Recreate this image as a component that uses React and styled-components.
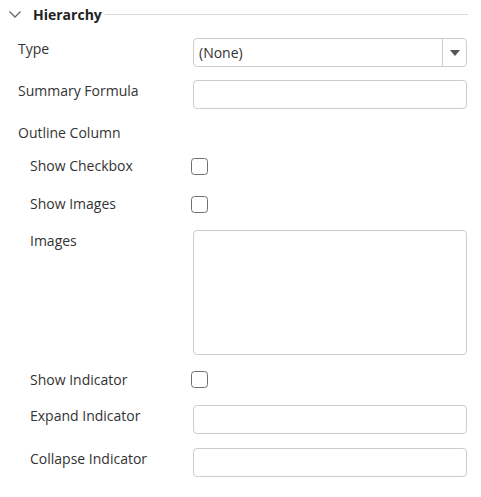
import React from "react";
import styled, { createGlobalStyle } from "styled-components";

const Global = createGlobalStyle`
  html, body { margin: 0; padding: 0; background: #fff; }
  body { font-family: "Open Sans", "Noto Sans", sans-serif; color: #333; }
`;

const Panel = styled.div`
  width: 481px;
  padding: 0 13px 0 0;
  box-sizing: border-box;
`;

const Header = styled.div`
  display: flex;
  align-items: center;
  height: 28px;
  padding-left: 8px;
`;

const Chevron = styled.svg`
  width: 14px;
  height: 14px;
  flex: none;
`;

const Title = styled.span`
  font-weight: 700;
  font-size: 14px;
  color: #222;
  margin-left: 11px;
  white-space: nowrap;
`;

const Rule = styled.div`
  flex: 1;
  height: 1px;
  background: #d9d9d9;
  margin-left: 3px;
`;

const Row = styled.div`
  display: flex;
  align-items: ${(p) => (p.$center ? "center" : "flex-start")};
  margin-top: ${(p) => p.$mt}px;
`;

const Label = styled.div`
  width: ${(p) => (p.$nested ? 163 : 175)}px;
  padding-left: ${(p) => (p.$nested ? 30 : 18)}px;
  padding-top: ${(p) => (p.$inset ? 1 : 0)}px;
  font-size: 14px;
  line-height: 20px;
  color: #333;
  white-space: nowrap;
  flex: none;
`;

const TextBox = styled.div`
  width: 274px;
  height: ${(p) => p.$h || 29}px;
  box-sizing: border-box;
  border: 1px solid #cdcdcd;
  border-radius: 4px;
  background: #fff;
`;

const Select = styled.div`
  width: 274px;
  height: 29px;
  box-sizing: border-box;
  border: 1px solid #cdcdcd;
  border-radius: 4px;
  display: flex;
  align-items: center;
`;

const SelectValue = styled.span`
  flex: 1;
  padding-left: 5px;
  font-size: 14px;
  color: #333;
`;

const SelectButton = styled.div`
  width: 23px;
  height: 100%;
  border-left: 1px solid #cdcdcd;
  display: flex;
  align-items: center;
  justify-content: center;
`;

const Arrow = styled.div`
  width: 0;
  height: 0;
  border-left: 5.5px solid transparent;
  border-right: 5.5px solid transparent;
  border-top: 6px solid #555;
  margin-top: 1px;
`;

const Check = styled.div`
  width: 17px;
  height: 17px;
  box-sizing: border-box;
  border: 1.5px solid #6f6f6f;
  border-radius: 3.5px;
  margin-left: -2px;
`;

export default function App() {
  return (
    <>
      <Global />
      <Panel>
        <Header>
          <Chevron viewBox="0 0 14 14">
            <polyline points="1.5,4.5 7,10 12.5,4.5" fill="none" stroke="#666" strokeWidth="1.3" />
          </Chevron>
          <Title>Hierarchy</Title>
          <Rule />
        </Header>
        <Row $mt={10}>
          <Label $inset>Type</Label>
          <Select>
            <SelectValue>(None)</SelectValue>
            <SelectButton><Arrow /></SelectButton>
          </Select>
        </Row>
        <Row $mt={13}>
          <Label $inset>Summary Formula</Label>
          <TextBox />
        </Row>
        <Row $mt={14}>
          <Label>Outline Column</Label>
        </Row>
        <Row $mt={13} $center>
          <Label $nested>Show Checkbox</Label>
          <Check />
        </Row>
        <Row $mt={18} $center>
          <Label $nested>Show Images</Label>
          <Check />
        </Row>
        <Row $mt={16}>
          <Label $nested $inset>Images</Label>
          <TextBox $h={125} />
        </Row>
        <Row $mt={14.5} $center>
          <Label $nested>Show Indicator</Label>
          <Check />
        </Row>
        <Row $mt={15.5}>
          <Label $nested $inset>Expand Indicator</Label>
          <TextBox />
        </Row>
        <Row $mt={14}>
          <Label $nested $inset>Collapse Indicator</Label>
          <TextBox />
        </Row>
      </Panel>
    </>
  );
}
